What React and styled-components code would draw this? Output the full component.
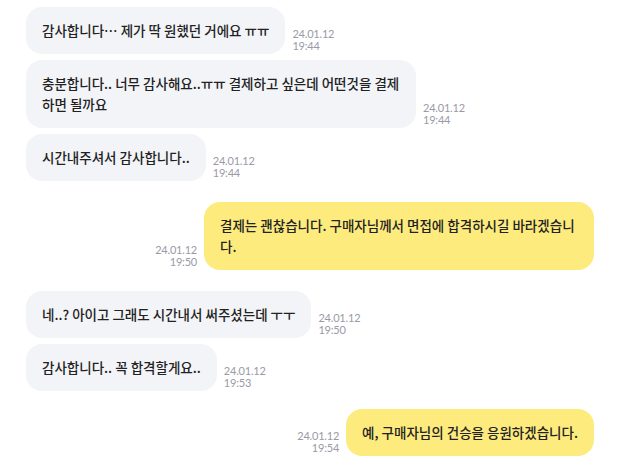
import React from "react";
import styled, { createGlobalStyle } from "styled-components";

const GlobalStyle = createGlobalStyle`
  body {
    margin: 0;
    background: #fff;
    font-family: "Noto Sans CJK KR", "Noto Sans", sans-serif;
  }
`;

const ChatList = styled.div`
  display: flex;
  flex-direction: column;
  padding: 7px 26px 0;
`;

const Row = styled.div`
  display: flex;
  align-items: flex-end;
  gap: 7px;
  flex-direction: ${(p) => (p.$mine ? "row-reverse" : "row")};
  margin-top: ${(p) => p.$gap}px;
`;

const Bubble = styled.div`
  max-width: 358px;
  padding: 13px 16px;
  border-radius: 16px;
  background: ${(p) => (p.$mine ? "#fdeb7e" : "#f3f4f8")};
  color: #222;
  font-size: 13.5px;
  font-weight: 500;
  line-height: 21px;
`;

const Stamp = styled.div`
  font-family: "Lato", "Open Sans", sans-serif;
  font-size: 11px;
  line-height: 12px;
  letter-spacing: -0.2px;
  color: #9a9aa6;
  text-align: ${(p) => (p.$mine ? "right" : "left")};
  padding-bottom: 2px;
`;

const messages = [
  { text: "감사합니다… 제가 딱 원했던 거에요 ㅠㅠ", time: "19:44", gap: 0 },
  { text: "충분합니다.. 너무 감사해요..ㅠㅠ 결제하고 싶은데 어떤것을 결제하면 될까요", time: "19:44", gap: 6 },
  { text: "시간내주셔서 감사합니다..", time: "19:44", gap: 6 },
  { text: "결제는 괜찮습니다. 구매자님께서 면접에 합격하시길 바라겠습니다.", time: "19:50", gap: 21, mine: true },
  { text: "네..? 아이고 그래도 시간내서 써주셨는데 ㅜㅜ", time: "19:50", gap: 21 },
  { text: "감사합니다.. 꼭 합격할게요..", time: "19:53", gap: 6 },
  { text: "예, 구매자님의 건승을 응원하겠습니다.", time: "19:54", gap: 18, mine: true },
];

export default function App() {
  return (
    <>
      <GlobalStyle />
      <ChatList>
        {messages.map((m, i) => (
          <Row key={i} $mine={m.mine} $gap={m.gap}>
            <Bubble $mine={m.mine}>{m.text}</Bubble>
            <Stamp $mine={m.mine}>
              24.01.12
              <br />
              {m.time}
            </Stamp>
          </Row>
        ))}
      </ChatList>
    </>
  );
}
